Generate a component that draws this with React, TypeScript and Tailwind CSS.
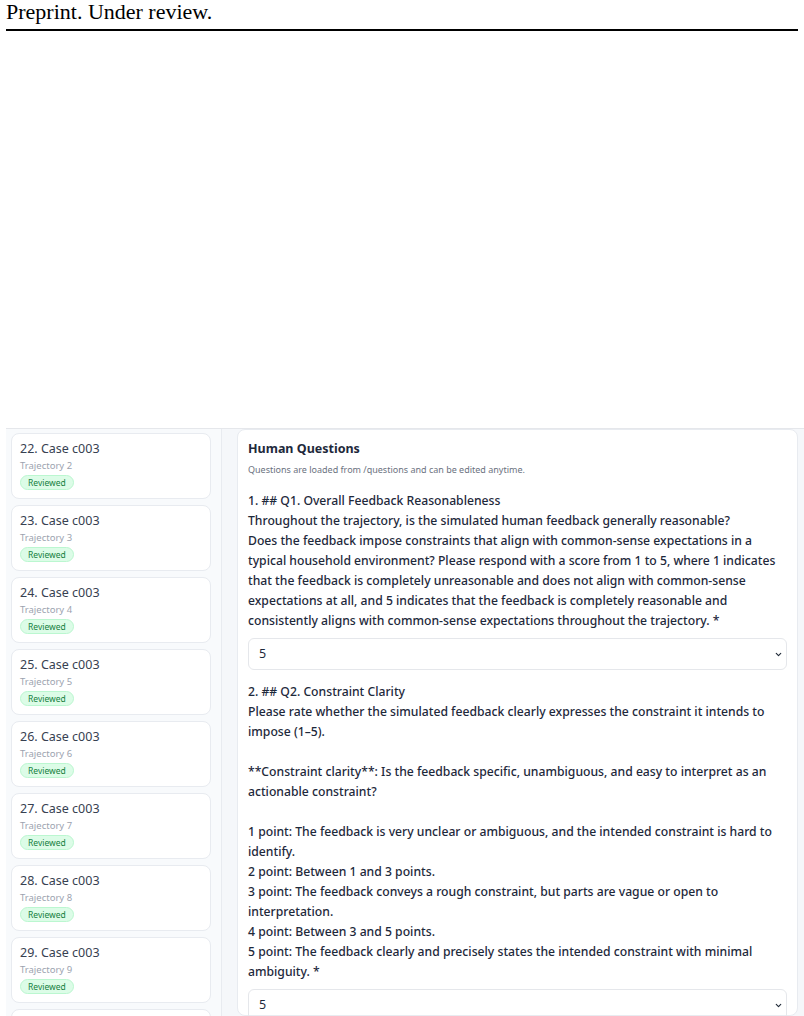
import { ChevronDown } from 'lucide-react';

const cases = [2, 3, 4, 5, 6, 7, 8, 9];

const questions = [
  {
    text: `1. ## Q1. Overall Feedback Reasonableness
Throughout the trajectory, is the simulated human feedback generally reasonable?
Does the feedback impose constraints that align with common-sense expectations in a typical household environment? Please respond with a score from 1 to 5, where 1 indicates that the feedback is completely unreasonable and does not align with common-sense expectations at all, and 5 indicates that the feedback is completely reasonable and consistently aligns with common-sense expectations throughout the trajectory. *`,
    value: '5',
  },
  {
    text: `2. ## Q2. Constraint Clarity
Please rate whether the simulated feedback clearly expresses the constraint it intends to impose (1–5).

**Constraint clarity**: Is the feedback specific, unambiguous, and easy to interpret as an actionable constraint?

1 point: The feedback is very unclear or ambiguous, and the intended constraint is hard to identify.
2 point: Between 1 and 3 points.
3 point: The feedback conveys a rough constraint, but parts are vague or open to interpretation.
4 point: Between 3 and 5 points.
5 point: The feedback clearly and precisely states the intended constraint with minimal ambiguity. *`,
    value: '5',
  },
];

export default function App() {
  return (
    <div className="w-[804px] h-[1016px] overflow-hidden bg-white flex flex-col">
      <div className="px-[6px]">
        <div className="text-[22px] leading-[24px] text-black" style={{ fontFamily: '"Liberation Serif", serif' }}>
          Preprint. Under review.
        </div>
        <div className="h-[2px] bg-black mt-[5px] w-[792px]" />
      </div>

      <div className="mt-[397px] flex flex-1 min-h-0 border-t border-[#e5e7eb] ml-[6px]" style={{ fontFamily: '"Noto Sans", sans-serif' }}>
        <div className="w-[216px] shrink-0 bg-[#f8fafc] border-r border-[#e8ebf0] pl-[5px] pr-[10px] pt-[4px] flex flex-col gap-[6px] overflow-hidden">
          {cases.map((n, i) => (
            <div key={n} className="h-[66px] shrink-0 bg-white border border-[#e8ebf0] rounded-lg px-[8px] pt-[6px]">
              <div className="text-[12.5px] leading-[18px] text-[#374151]">{22 + i}. Case c003</div>
              <div className="text-[9.5px] leading-[14px] mt-[1px] text-[#9ca3af]">Trajectory {n}</div>
              <div className="w-fit mt-[2px] px-[7px] rounded-full bg-[#dcfce7] border border-[#bbf7d0] text-[#15803d] text-[8.5px] leading-[13px]">
                Reviewed
              </div>
            </div>
          ))}
          <div className="h-[66px] shrink-0 bg-white border border-[#e8ebf0] rounded-lg" />
        </div>

        <div className="flex-1 bg-[#f5f7fa] pl-[15px] pr-[6px]">
          <div className="h-full bg-white border border-[#e8ebf0] rounded-lg px-[10px] pt-[10px]">
            <div className="text-[12.5px] leading-[18px] font-bold text-[#1e293b]">Human Questions</div>
            <div className="text-[9px] leading-[14px] text-[#6b7280] mt-[5px]">
              Questions are loaded from /questions and can be edited anytime.
            </div>
            <div className="mt-[14px] flex flex-col gap-[12px]">
              {questions.map((q, i) => (
                <div key={i}>
                  <div className="whitespace-pre-line text-[12.2px] leading-[20px] font-medium text-[#1e293b]">{q.text}</div>
                  <div className="mt-[7px] h-[32px] border border-[#e5e7eb] rounded-md flex items-center justify-between pl-[10px] pr-[3px] text-[12.5px] text-[#1e293b]">
                    <span>{q.value}</span>
                    <ChevronDown className="w-[9px] h-[9px] text-[#1f2937]" strokeWidth={3} />
                  </div>
                </div>
              ))}
            </div>
          </div>
        </div>
      </div>
    </div>
  );
}
